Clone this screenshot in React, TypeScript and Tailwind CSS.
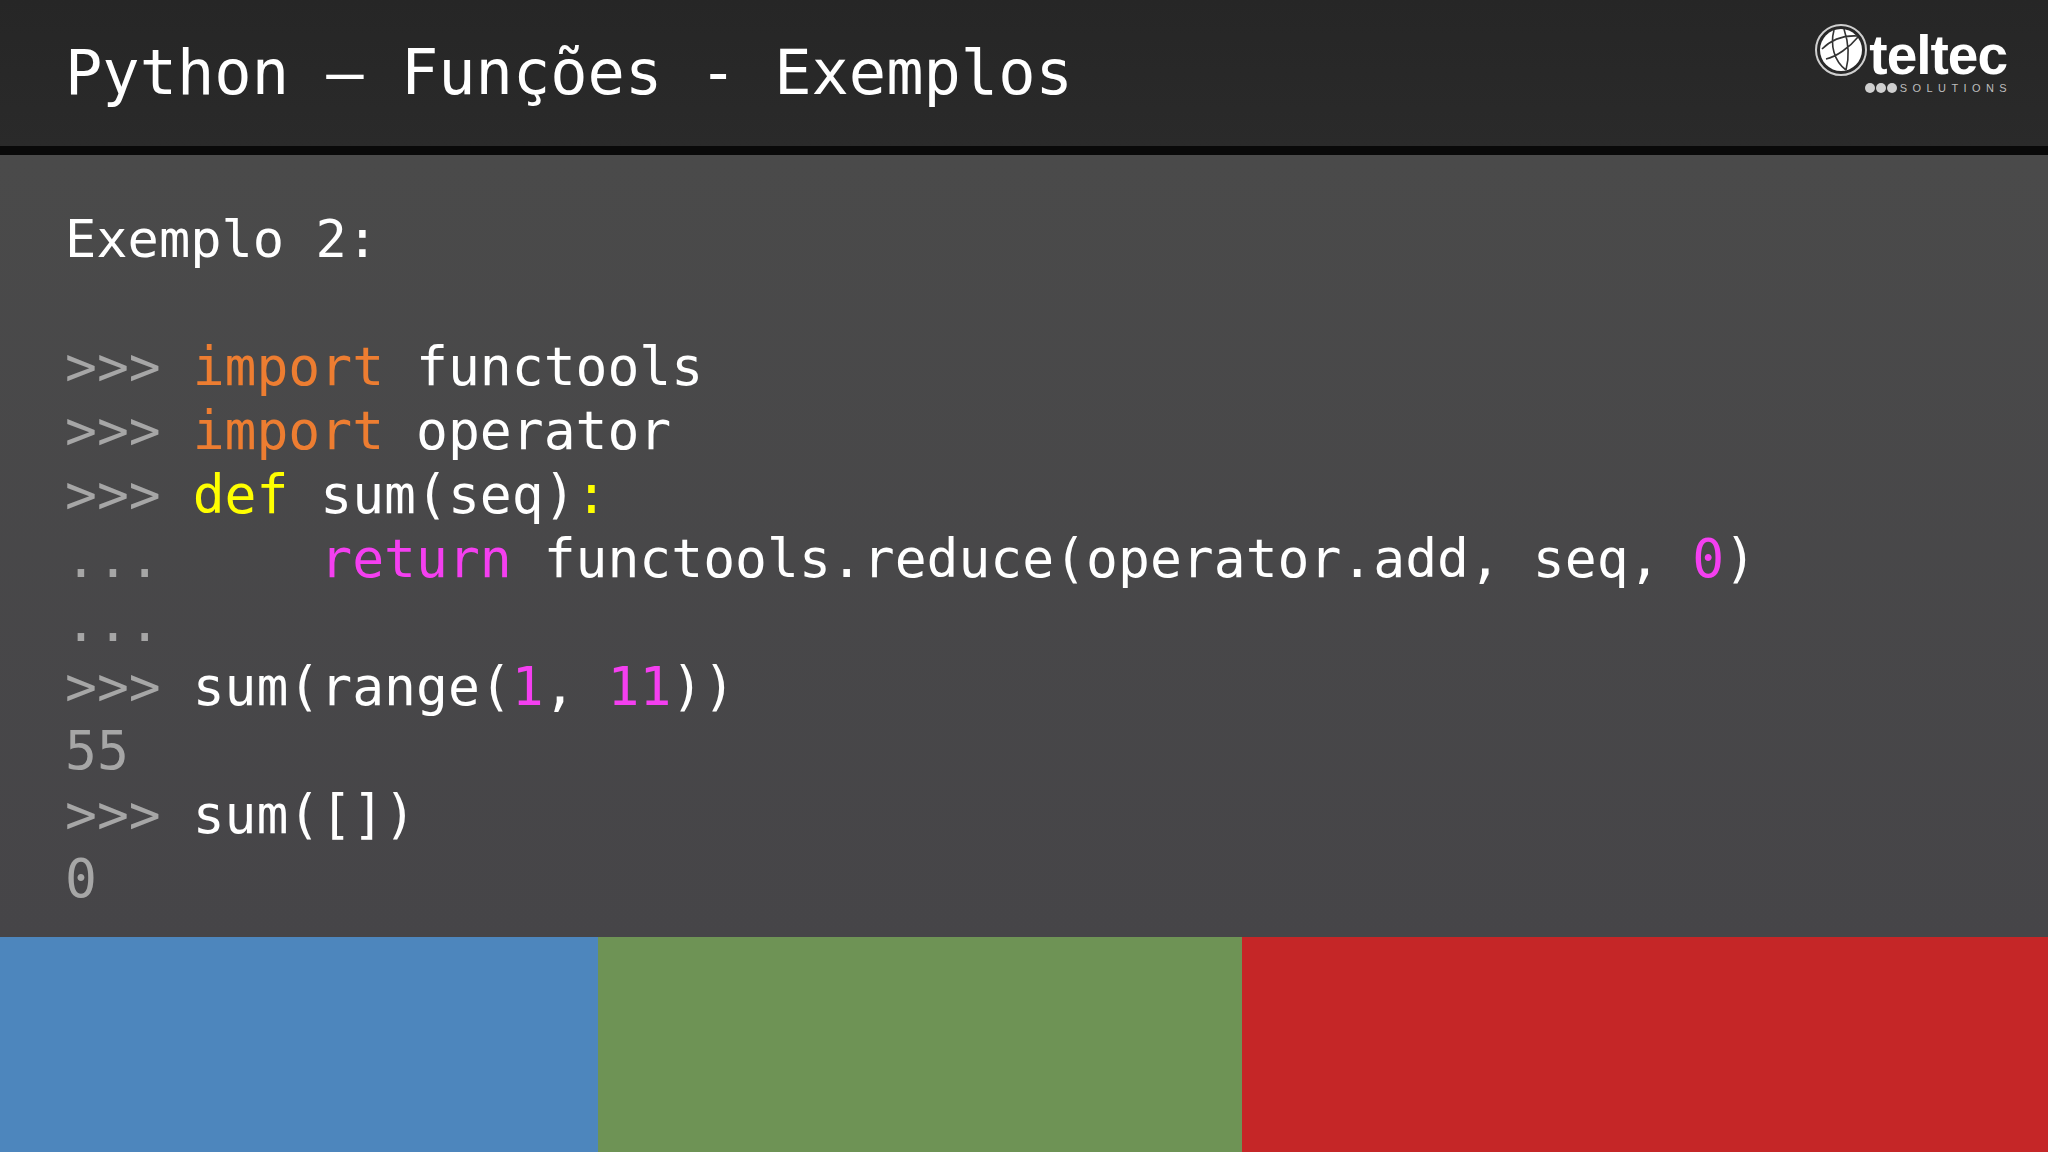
import React from 'react';

const mono = "font-['DejaVu_Sans_Mono',monospace]";

const Prompt = () => <span className="text-[#a6a6a6]">{'>>> '}</span>;
const Dots = () => <span className="text-[#a6a6a6]">{'... '}</span>;

const Logo = () => (
  <div className="flex items-start mt-[23px] mr-[41px]">
    <svg width="54" height="54" viewBox="0 0 54 54" className="-mr-[3px] shrink-0">
      <circle cx="27" cy="27" r="25" fill="none" stroke="#cfcfcf" strokeWidth="2" />
      <circle cx="27" cy="27" r="21" fill="#ffffff" />
      <path d="M8 26 C18 16 30 12 44 13 M20 7 C16 22 20 38 32 47 M12 36 C22 34 36 24 44 14 M30 6 C34 18 36 32 32 47" fill="none" stroke="#333" strokeWidth="1.6" />
    </svg>
    <div className="flex flex-col items-end mt-[9px]">
      <span className="font-['Liberation_Sans',sans-serif] font-bold text-white text-[55px] leading-[46px] tracking-[-1px]">teltec</span>
      <div className="flex items-center gap-[1px] mt-[5px]">
        <span className="w-[10px] h-[10px] rounded-full bg-[#cfcfcf]" />
        <span className="w-[10px] h-[10px] rounded-full bg-[#cfcfcf]" />
        <span className="w-[10px] h-[10px] rounded-full bg-[#cfcfcf] mr-[2px]" />
        <span className="font-['Liberation_Sans',sans-serif] text-[#bdbdbd] text-[11px] leading-[10px] tracking-[5.4px] -mr-[5px]">SOLUTIONS</span>
      </div>
    </div>
  </div>
);

export default function App() {
  return (
    <div className={`w-[2048px] h-[1152px] flex flex-col overflow-hidden ${mono}`}>
      {/* Title bar */}
      <header className="h-[146px] shrink-0 flex justify-between items-start bg-gradient-to-b from-[#262626] to-[#2a2a2a]">
        <h1 className="ml-[65px] mt-[35px] text-[62px] leading-[75px] text-white whitespace-pre font-normal">Python – Funções - Exemplos</h1>
        <Logo />
      </header>
      <div className="h-[9px] shrink-0 bg-[#090909]" />

      {/* Slide content */}
      <main className="h-[782px] shrink-0 bg-gradient-to-b from-[#4a4a4a] to-[#464548] pl-[65px] pt-[52px] text-[53px] leading-[64px] text-white whitespace-pre">
        <div className="text-[52px]">Exemplo 2:</div>
        <div className="h-[64px]" />
        <div><Prompt /><span className="text-[#ed7d31]">import</span> functools</div>
        <div><Prompt /><span className="text-[#ed7d31]">import</span> operator</div>
        <div><Prompt /><span className="text-[#ffff00]">def</span> sum(seq)<span className="text-[#ffff00]">:</span></div>
        <div><Dots />    <span className="text-[#f43ff0]">return</span> functools.reduce(operator.add, seq, <span className="text-[#f43ff0]">0</span>)</div>
        <div><Dots /></div>
        <div><Prompt />sum(range(<span className="text-[#f43ff0]">1</span>, <span className="text-[#f43ff0]">11</span>))</div>
        <div className="text-[#a6a6a6]">55</div>
        <div><Prompt />sum([])</div>
        <div className="text-[#a6a6a6]">0</div>
      </main>

      {/* Colour bands */}
      <div className="flex-1 flex">
        <div className="w-[598px] bg-[#4d86bd]" />
        <div className="w-[644px] bg-[#6e9355]" />
        <div className="flex-1 bg-[#c52627]" />
      </div>
    </div>
  );
}
